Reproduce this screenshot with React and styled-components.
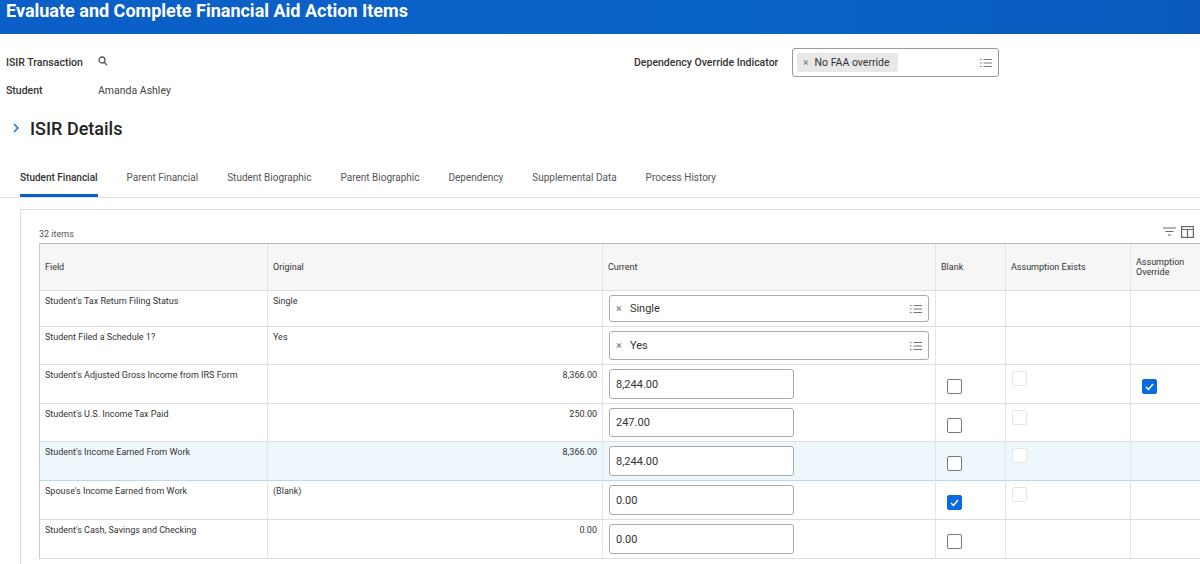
import React from "react";
import styled, { createGlobalStyle } from "styled-components";

const G = createGlobalStyle`
  body{margin:0;font-family:Roboto,"Liberation Sans",sans-serif;color:#333;background:#fff;overflow:hidden;}
`;
const Header = styled.div`height:34px;background:linear-gradient(90deg,#0b5fc6,#0a63c9 60%,#0a5bbd);color:#fff;font-weight:700;font-size:18px;padding:0 6px;line-height:22px;`;
const Fields = styled.div`display:grid;grid-template-columns:92px 536px 158px 1fr;grid-template-rows:29px 27px;padding:14px 6px 0;font-size:10.5px;align-items:center;`;
const Label = styled.div`font-weight:500;color:#333;`;
const Value = styled.div`color:#444;`;
const Prompt = styled.div`width:207px;height:29px;border:1px solid #999;border-radius:3px;display:flex;align-items:center;justify-content:space-between;padding:0 6px 0 4px;box-sizing:border-box;`;
const Chip = styled.span`background:#e8e8e8;border-radius:2px;padding:3px 8px 3px 6px;font-size:10.5px;color:#333;display:flex;gap:6px;`;
const Section = styled.div`display:flex;align-items:center;gap:10px;padding:0 12px;margin-top:7px;font-size:18px;font-weight:500;color:#222;height:34px;`;
const Tabs = styled.div`display:flex;margin:24px 0 0 0;padding-left:20px;border-bottom:1px solid #e2e2e2;height:28px;font-size:10px;`;
const Tab = styled.div`margin-right:29px;padding-top:3px;color:${p=>p.$a?"#333":"#555"};font-weight:${p=>p.$a?500:400};border-bottom:${p=>p.$a?"3px solid #0a5fc6":"none"};height:${p=>p.$a?22:25}px;`;
const Box = styled.div`margin:11px 0 0 20px;border:1px solid #ddd;border-right:none;padding:16px 0 0 18px;height:400px;`;
const TopRow = styled.div`display:flex;justify-content:space-between;font-size:9px;color:#555;height:17px;padding-right:6px;`;
const Table = styled.div`display:grid;grid-template-columns:228px 335px 333px 70px 125px 70px;border-top:1px solid #bbb;border-left:1px solid #ccc;font-size:9px;`;
const Cell = styled.div`border-right:1px solid #e4e4e4;border-bottom:1px solid #ddd;height:${p=>p.$h}px;padding:${p=>p.$p||"5px"};box-sizing:border-box;background:${p=>p.$hl?"#eef7fb":p.$head?"#f6f6f6":"#fff"};text-align:${p=>p.$r?"right":"left"};color:#333;display:flex;flex-direction:column;justify-content:${p=>p.$c?"center":"flex-start"};${p=>p.$hl?"border-bottom-color:#b8dbe8;":""}`;
const Input = styled.div`width:${p=>p.$w}px;height:${p=>p.$hh||29}px;border:1px solid #aaa;border-radius:3px;box-sizing:border-box;display:flex;align-items:center;padding:0 6px;font-size:11px;justify-content:space-between;background:#fff;`;
const Check = styled.div`width:13px;height:13px;border:1px solid ${p=>p.$on?"#0a6ae0":p.$dis?"#e6e6e6":"#777"};border-radius:2px;background:${p=>p.$on?"#0a6ae0":"#fff"};display:flex;align-items:center;justify-content:center;margin:${p=>p.$m};`;

const ListIcon=()=> <svg width="12" height="10" viewBox="0 0 12 10" fill="none" stroke="#777" strokeWidth="1"><path d="M0 1.5h1.5M0 5h1.5M0 8.5h1.5M3.5 1.5H12M3.5 5H12M3.5 8.5H12"/></svg>;
const X=()=> <span style={{color:"#777"}}>×</span>;
const Tick=()=> <svg width="9" height="8" viewBox="0 0 9 8"><path d="M1 4l2.5 2.5L8 1" stroke="#fff" strokeWidth="1.5" fill="none"/></svg>;

const rows=[
 {f:"Student's Tax Return Filing Status",o:"Single",sel:"Single",h:36},
 {f:"Student Filed a Schedule 1?",o:"Yes",sel:"Yes",h:38},
 {f:"Student's Adjusted Gross Income from IRS Form",o:"8,366.00",r:1,v:"8,244.00",h:39,ov:1},
 {f:"Student's U.S. Income Tax Paid",o:"250.00",r:1,v:"247.00",h:38},
 {f:"Student's Income Earned From Work",o:"8,366.00",r:1,v:"8,244.00",h:39,hl:1},
 {f:"Spouse's Income Earned from Work",o:"(Blank)",v:"0.00",h:39,bl:1},
 {f:"Student's Cash, Savings and Checking",o:"0.00",r:1,v:"0.00",h:39},
];

export default function App(){
 return <>
  <G/>
  <Header>Evaluate and Complete Financial Aid Action Items</Header>
  <Fields>
   <Label>ISIR Transaction</Label>
   <Value><svg width="10" height="10" viewBox="0 0 10 10" fill="none" stroke="#555" strokeWidth="1.3"><circle cx="4" cy="4" r="3"/><path d="M6.2 6.2L9 9"/></svg></Value>
   <Label>Dependency Override Indicator</Label>
   <Prompt><Chip><X/>No FAA override</Chip><ListIcon/></Prompt>
   <Label>Student</Label><Value>Amanda Ashley</Value><div/><div/>
  </Fields>
  <Section><svg width="8" height="10" viewBox="0 0 8 10"><path d="M2 1l4 4-4 4" stroke="#0a5fc6" strokeWidth="1.3" fill="none"/></svg>ISIR Details</Section>
  <Tabs>
   {["Student Financial","Parent Financial","Student Biographic","Parent Biographic","Dependency","Supplemental Data","Process History"].map((t,i)=><Tab key={t} $a={i===0}>{t}</Tab>)}
  </Tabs>
  <Box>
   <TopRow><span style={{paddingTop:3}}>32 items</span>
    <span style={{display:"flex",gap:5}}>
     <svg width="13" height="11" viewBox="0 0 13 11" stroke="#666" strokeWidth="1.2"><path d="M0 2h13M2.5 5.5h8M5 9h3"/></svg>
     <svg width="13" height="12" viewBox="0 0 13 12" fill="none" stroke="#666" strokeWidth="1.2"><rect x="0.6" y="0.6" width="11.8" height="10.8"/><path d="M0.6 3.5h11.8M6.5 3.5v8"/></svg>
    </span></TopRow>
   <Table>
    {["Field","Original","Current","Blank","Assumption Exists","Assumption Override"].map(h=><Cell key={h} $head $h={47} $c>{h}</Cell>)}
    {rows.map((r,i)=><React.Fragment key={i}>
     <Cell $h={r.h} $hl={r.hl}>{r.f}</Cell>
     <Cell $h={r.h} $hl={r.hl} $r={r.r}>{r.o}</Cell>
     <Cell $h={r.h} $hl={r.hl} $p="4px 6px">
      {r.sel?<Input $w={320}><span style={{display:"flex",gap:8}}><X/>{r.sel}</span><ListIcon/></Input>:<Input $w={185} $hh={30}>{r.v}</Input>}
     </Cell>
     <Cell $h={r.h} $hl={r.hl} $p="0">{!r.sel&&<Check $m="14px 0 0 11px" $on={r.bl}>{r.bl&&<Tick/>}</Check>}</Cell>
     <Cell $h={r.h} $hl={r.hl} $p="0">{!r.sel&&i<6&&<Check $m="6px 0 0 6px" $dis/>}</Cell>
     <Cell $h={r.h} $hl={r.hl} $p="0">{r.ov&&<Check $m="14px 0 0 11px" $on><Tick/></Check>}</Cell>
    </React.Fragment>)}
   </Table>
  </Box>
 </>;
}
